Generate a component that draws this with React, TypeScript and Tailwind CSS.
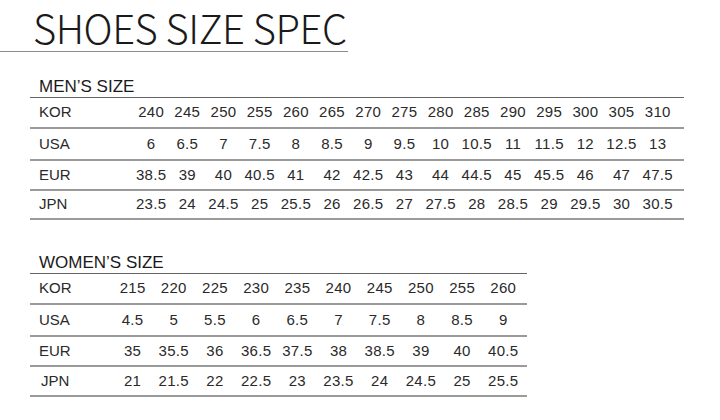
const men = {
  KOR: ["240", "245", "250", "255", "260", "265", "270", "275", "280", "285", "290", "295", "300", "305", "310"],
  USA: ["6", "6.5", "7", "7.5", "8", "8.5", "9", "9.5", "10", "10.5", "11", "11.5", "12", "12.5", "13"],
  EUR: ["38.5", "39", "40", "40.5", "41", "42", "42.5", "43", "44", "44.5", "45", "45.5", "46", "47", "47.5"],
  JPN: ["23.5", "24", "24.5", "25", "25.5", "26", "26.5", "27", "27.5", "28", "28.5", "29", "29.5", "30", "30.5"],
};

const women = {
  KOR: ["215", "220", "225", "230", "235", "240", "245", "250", "255", "260"],
  USA: ["4.5", "5", "5.5", "6", "6.5", "7", "7.5", "8", "8.5", "9"],
  EUR: ["35", "35.5", "36", "36.5", "37.5", "38", "38.5", "39", "40", "40.5"],
  JPN: ["21", "21.5", "22", "22.5", "23", "23.5", "24", "24.5", "25", "25.5"],
};

const menHeights = ["h-[31px]", "h-[32px]", "h-[30px]", "h-[29px]"];
const womenHeights = ["h-[31px]", "h-[32px]", "h-[30px]", "h-[30px]"];

export default function App() {
  return (
    <div className="w-[720px] h-[420px] bg-white text-[#222] font-['Liberation_Sans',Arial,sans-serif] overflow-hidden">
      {/* Title */}
      <div className="w-[348px] border-b-[1.5px] border-[#8c8c8c] pl-[33px] pt-[4px]">
        <h1 className="text-[40px] leading-[58px] -mt-[6px] -mb-[5px] font-light tracking-[-0.5px] text-[#1a1a1a] font-['Noto_Sans_CJK_KR',sans-serif]">
          SHOES SIZE SPEC
        </h1>
      </div>

      {/* Men */}
      <section className="ml-[30px] mt-[25px] w-[654px]">
        <h2 className="pl-[9px] text-[17px] leading-[20px] text-[#1a1a1a]">MEN’S SIZE</h2>
        <div className="border-t border-[#666]">
          {Object.entries(men).map(([label, vals], r) => (
            <div
              key={label}
              className={`grid grid-cols-[103px_repeat(15,36.2px)] items-center border-b-2 border-[#9a9a9a] ${menHeights[r]}`}
            >
              <span className="pl-[9px] text-[15px] text-[#2a2a2a]">{label}</span>
              {vals.map((v, i) => (
                <span key={i} className="text-center text-[15px] tracking-[0.3px] text-[#2a2a2a] whitespace-nowrap">
                  {v}
                </span>
              ))}
            </div>
          ))}
        </div>
      </section>

      {/* Women */}
      <section className="ml-[30px] mt-[33px] w-[497px]">
        <h2 className="pl-[9px] text-[17px] leading-[20px] text-[#1a1a1a]">WOMEN’S SIZE</h2>
        <div className="border-t border-[#666]">
          {Object.entries(women).map(([label, vals], r) => (
            <div
              key={label}
              className={`grid grid-cols-[82px_repeat(10,41.2px)] items-center border-b-2 border-[#9a9a9a] ${womenHeights[r]}`}
            >
              <span className={`${label === "JPN" ? "pl-[11px]" : "pl-[9px]"} text-[15px] text-[#2a2a2a]`}>{label}</span>
              {vals.map((v, i) => (
                <span key={i} className="text-center text-[15px] tracking-[0.3px] text-[#2a2a2a] whitespace-nowrap">
                  {v}
                </span>
              ))}
            </div>
          ))}
        </div>
      </section>
    </div>
  );
}
